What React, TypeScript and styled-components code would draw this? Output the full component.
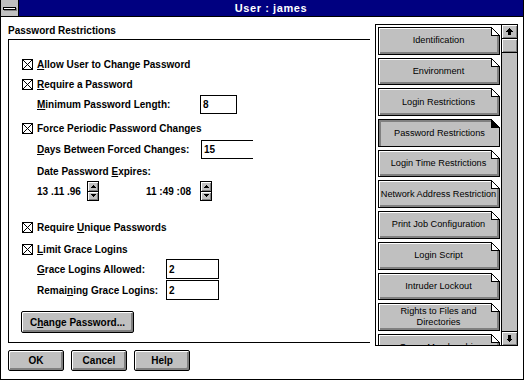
import React from 'react';
import styled, { createGlobalStyle } from 'styled-components';

const GlobalStyle = createGlobalStyle`
  * { box-sizing: border-box; }
  html, body { margin: 0; padding: 0; background: #fff; }
  body {
    font-family: "Liberation Sans", Arial, sans-serif;
    font-size: 10px;
    color: #000;
  }
`;

const pages = [
  'Identification',
  'Environment',
  'Login Restrictions',
  'Password Restrictions',
  'Login Time Restrictions',
  'Network Address Restriction',
  'Print Job Configuration',
  'Login Script',
  'Intruder Lockout',
  'Rights to Files and Directories',
  'Group Membership',
];

const bevel = 'inset 1px 1px 0 #fff, inset -1px -1px 0 #808080';

// window frame
const Window = styled.div`
  width: 524px;
  height: 380px;
  border: 1px solid #000;
  border-top: none;
  display: flex;
  flex-direction: column;
  background: #fff;
  overflow: hidden;
`;

const TitleBar = styled.div`
  display: flex;
  flex: none;
  height: 17px;
  background: #000080;
  border-bottom: 1px solid #000;
`;

const SysMenu = styled.div`
  width: 18px;
  flex: none;
  background: #c0c0c0;
  border-right: 1px solid #000;
  display: flex;
  align-items: center;
  justify-content: center;
  span {
    width: 13px;
    height: 3px;
    border: 1px solid #000;
    background: #fff;
    box-shadow: 1px 1px 0 #808080;
  }
`;

const Title = styled.div`
  flex: 1;
  color: #fff;
  font-weight: bold;
  font-size: 11px;
  letter-spacing: 0.6px;
  line-height: 16px;
  text-align: center;
`;

const Body = styled.div`
  flex: 1;
  display: flex;
  padding-left: 7px;
`;

// left side: settings
const LeftCol = styled.div`
  width: 362px;
  flex: none;
  display: flex;
  flex-direction: column;
`;

const Heading = styled.div`
  height: 22px;
  padding-top: 6px;
  line-height: 16px;
  font-weight: bold;
`;

const GroupBox = styled.div`
  border: 1px solid #000;
  border-right: none;
  display: flex;
  flex-direction: column;
  padding-bottom: 9px;
`;

const Row = styled.div<{ $mt?: number; $indent?: number }>`
  display: flex;
  align-items: center;
  flex: none;
  height: 20px;
  margin-top: ${p => p.$mt ?? 0}px;
  padding-left: ${p => p.$indent ?? 13}px;
  font-weight: bold;
  white-space: nowrap;
`;

const Box = styled.span`
  width: 11px;
  height: 11px;
  flex: none;
  margin-right: 4px;
  border: 1px solid #000;
  background: #fff;
  display: flex;
  svg { display: block; }
`;

const Label = styled.span<{ $w?: number }>`
  flex: none;
  width: ${p => (p.$w ? `${p.$w}px` : 'auto')};
`;

const Field = styled.div<{ $w: number; $open?: boolean; $h?: number }>`
  width: ${p => p.$w}px;
  height: ${p => p.$h ?? 19}px;
  flex: none;
  border: 1px solid #000;
  border-right: ${p => (p.$open ? 'none' : '1px solid #000')};
  background: #fff;
  padding-left: 2px;
  display: flex;
  align-items: center;
  font-weight: bold;
`;

const DateValue = styled.span<{ $w: number; $ml?: number }>`
  width: ${p => p.$w}px;
  margin-left: ${p => p.$ml ?? 0}px;
  flex: none;
`;

const Spinner = styled.div`
  width: 12px;
  height: 20px;
  flex: none;
  border: 1px solid #000;
  background: #c0c0c0;
  display: flex;
  flex-direction: column;
`;

const SpinHalf = styled.div`
  flex: 1;
  display: flex;
  align-items: center;
  justify-content: center;
  box-shadow: ${bevel};
  & + & { border-top: 1px solid #000; }
  svg { display: block; }
`;

const PushButton = styled.button<{ $w: number; $ml?: number; $mt?: number; $h?: number }>`
  width: ${p => p.$w}px;
  height: ${p => p.$h ?? 21}px;
  margin-left: ${p => p.$ml ?? 0}px;
  margin-top: ${p => p.$mt ?? 0}px;
  flex: none;
  padding: 0;
  border: 1px solid #000;
  border-radius: 2px;
  background: #c0c0c0;
  box-shadow: inset 1px 1px 0 #fff, inset -1px -1px 0 #808080, inset -2px -2px 0 #808080;
  font-family: "Liberation Sans", Arial, sans-serif;
  font-size: 10px;
  font-weight: bold;
  color: #000;
`;

const ButtonRow = styled.div`
  display: flex;
  gap: 7px;
  margin-top: 7px;
`;

// right side: page list
const Panel = styled.div`
  width: 143px;
  height: 322px;
  flex: none;
  margin: 7px 0 0 5px;
  border: 1px solid #000;
  display: flex;
  overflow: hidden;
`;

const TabList = styled.div`
  flex: 1;
  padding: 2px 1px 0 2px;
  display: flex;
  flex-direction: column;
  gap: 3px;
  overflow: hidden;
`;

const Tab = styled.div<{ $active?: boolean }>`
  position: relative;
  flex: none;
  height: 27.7px;
  border: 1px solid #000;
  background: #c0c0c0;
  box-shadow: ${p =>
    p.$active
      ? 'inset 2px 2px 0 #808080'
      : 'inset 1px 1px 0 #fff, inset -1px -1px 0 #808080, inset -2px -2px 0 #808080'};
  display: flex;
  align-items: center;
  justify-content: center;
  padding: ${p => (p.$active ? '2px 0 0 1px' : '0 1px 0 0')};
  text-align: center;
  font-size: 9.2px;
  line-height: 11px;
  svg { position: absolute; top: -1px; right: -1px; display: block; }
`;

const ScrollBar = styled.div`
  width: 16px;
  flex: none;
  border-left: 1px solid #000;
  background: #c0c0c0;
  display: flex;
  flex-direction: column;
`;

const ScrollButton = styled.div<{ $down?: boolean }>`
  height: 14px;
  flex: none;
  background: #c0c0c0;
  box-shadow: ${bevel};
  border-bottom: ${p => (p.$down ? 'none' : '1px solid #000')};
  border-top: ${p => (p.$down ? '1px solid #000' : 'none')};
  margin-top: ${p => (p.$down ? 'auto' : '0')};
  display: flex;
  align-items: center;
  justify-content: center;
  svg { display: block; }
`;

const Thumb = styled.div`
  height: 14px;
  flex: none;
  background: #c0c0c0;
  box-shadow: ${bevel};
  border-bottom: 1px solid #000;
`;

const Check = () => (
  <Box>
    <svg width="9" height="9" viewBox="0 0 9 9">
      <path d="M0 0L9 9M9 0L0 9" stroke="#000" strokeWidth="1" />
    </svg>
  </Box>
);

const Fold = ({ active }: { active?: boolean }) => (
  <svg width="9" height="9" viewBox="0 0 9 9" shapeRendering="crispEdges">
    <rect width="9" height="9" fill="#fff" />
    {active ? (
      <polygon points="0,0 9,9 0,9" fill="#000" />
    ) : (
      <path d="M0.5 0V8.5H9M0 0L9 9" fill="none" stroke="#000" />
    )}
  </svg>
);

const Arrow = ({ down }: { down?: boolean }) => (
  <svg width="7" height="7" viewBox="0 0 7 7" shapeRendering="crispEdges">
    <polygon
      points={down ? '3.5,7 7,3.5 5,3.5 5,0 2,0 2,3.5 0,3.5' : '3.5,0 7,3.5 5,3.5 5,7 2,7 2,3.5 0,3.5'}
      fill="#000"
    />
  </svg>
);

const Tri = ({ down }: { down?: boolean }) => (
  <svg width="5" height="3" viewBox="0 0 5 3" shapeRendering="crispEdges">
    <polygon points={down ? '0,0 5,0 2.5,3' : '2.5,0 5,3 0,3'} fill="#000" />
  </svg>
);

const DateSpinner = () => (
  <Spinner>
    <SpinHalf><Tri /></SpinHalf>
    <SpinHalf><Tri down /></SpinHalf>
  </Spinner>
);

export default function App() {
  return (
    <>
      <GlobalStyle />
      <Window>
        <TitleBar>
          <SysMenu><span /></SysMenu>
          <Title>User : james</Title>
        </TitleBar>
        <Body>
          <LeftCol>
            <Heading>Password Restrictions</Heading>
            <GroupBox>
              <Row $mt={14}>
                <Check />
                <Label><u>A</u>llow User to Change Password</Label>
              </Row>
              <Row>
                <Check />
                <Label><u>R</u>equire a Password</Label>
              </Row>
              <Row $indent={28}>
                <Label $w={163}><u>M</u>inimum Password Length:</Label>
                <Field $w={37}>8</Field>
              </Row>
              <Row $mt={4}>
                <Check />
                <Label>Force Periodic Password Changes</Label>
              </Row>
              <Row $mt={1} $indent={28}>
                <Label $w={164}><u>D</u>ays Between Forced Changes:</Label>
                <Field $w={52} $open>15</Field>
              </Row>
              <Row $mt={2} $indent={28}>
                <Label>Date Password <u>E</u>xpires:</Label>
              </Row>
              <Row $indent={28}>
                <DateValue $w={50}>13 .11 .96</DateValue>
                <DateSpinner />
                <DateValue $w={54} $ml={47}>11 :49 :08</DateValue>
                <DateSpinner />
              </Row>
              <Row $mt={16}>
                <Check />
                <Label>Require <u>U</u>nique Passwords</Label>
              </Row>
              <Row $mt={2}>
                <Check />
                <Label><u>L</u>imit Grace Logins</Label>
              </Row>
              <Row $indent={28}>
                <Label $w={129}><u>G</u>race Logins Allowed:</Label>
                <Field $w={53} $h={20}>2</Field>
              </Row>
              <Row $mt={1} $indent={28}>
                <Label $w={129}>Remai<u>n</u>ing Grace Logins:</Label>
                <Field $w={53} $h={20}>2</Field>
              </Row>
              <PushButton $w={113} $h={22} $ml={12} $mt={11}>
                C<u>h</u>ange Password...
              </PushButton>
            </GroupBox>
            <ButtonRow>
              <PushButton $w={56}>OK</PushButton>
              <PushButton $w={56}>Cancel</PushButton>
              <PushButton $w={56}>Help</PushButton>
            </ButtonRow>
          </LeftCol>
          <Panel>
            <TabList>
              {pages.map(name => (
                <Tab key={name} $active={name === 'Password Restrictions'}>
                  {name}
                  <Fold active={name === 'Password Restrictions'} />
                </Tab>
              ))}
            </TabList>
            <ScrollBar>
              <ScrollButton><Arrow /></ScrollButton>
              <Thumb />
              <ScrollButton $down><Arrow down /></ScrollButton>
            </ScrollBar>
          </Panel>
        </Body>
      </Window>
    </>
  );
}
